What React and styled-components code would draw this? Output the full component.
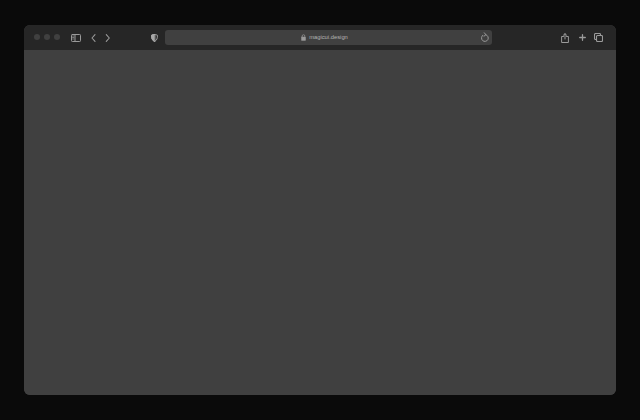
import styled, { createGlobalStyle } from "styled-components"

const Global = createGlobalStyle`
  html, body, #root {
    margin: 0;
    height: 100%;
  }
  body {
    background: #0a0a0a;
    font-family: "Liberation Sans", Arial, sans-serif;
  }
`

const Page = styled.div`
  box-sizing: border-box;
  width: 640px;
  height: 420px;
  padding: 25px 24px;
`

const Browser = styled.div`
  display: flex;
  flex-direction: column;
  height: 100%;
  border-radius: 6px;
  overflow: hidden;
  background: #404040;
`

const Toolbar = styled.div`
  display: flex;
  align-items: center;
  flex: none;
  height: 25px;
  box-sizing: border-box;
  padding: 0 13px 0 10px;
  background: #262626;
`

const Lights = styled.div`
  display: flex;
  gap: 4px;
  margin: 0 11px 1px 0;
`

const Light = styled.span`
  width: 6px;
  height: 6px;
  border-radius: 50%;
  background: #404040;
`

const Icon = styled.svg`
  display: block;
  flex: none;
  fill: none;
  stroke: #9a9a9a;
  stroke-width: 1;
  stroke-linecap: round;
  stroke-linejoin: round;
  margin-left: ${p => p.$left || 0}px;
`

const Address = styled.div`
  position: relative;
  display: flex;
  align-items: center;
  justify-content: center;
  gap: 3px;
  box-sizing: border-box;
  width: 327px;
  height: 15px;
  padding-right: 8px;
  margin: 0 auto 0 7px;
  border-radius: 3px;
  background: #404040;
`

const Url = styled.span`
  font-size: 5.8px;
  line-height: 15px;
  color: #b4b4b4;
`

const Reload = styled(Icon)`
  position: absolute;
  right: 2px;
  top: 2px;
`

const Content = styled.div`
  flex: 1;
  background: #404040;
`

export default function App() {
  return (
    <Page>
      <Global />
      <Browser>
        <Toolbar>
          <Lights>
            <Light />
            <Light />
            <Light />
          </Lights>
          <Icon width="10" height="8" viewBox="0 0 10 8">
            <rect x="0.5" y="0.5" width="9" height="7" rx="0.8" />
            <path d="M4 0.5v7" />
            <path d="M1.6 2h1.200M1.600 3.500h1.200M1.600 5h1.200" strokeWidth="0.7" />
          </Icon>
          <Icon $left={10} width="5" height="8" viewBox="0 0 5 8">
            <path d="M4 .6 1 4l3 3.400" strokeWidth="1.100" />
          </Icon>
          <Icon $left={9} width="5" height="8" viewBox="0 0 5 8">
            <path d="M1.300.6 4.300 4l-3 3.400" strokeWidth="1.100" />
          </Icon>
          <Icon $left={41} width="7" height="8" viewBox="0 0 7 8">
            <path d="M3.500.5C4.500.5 5.500.8 6.400 1.200 6.600 4 6 6.300 3.500 7.500 1 6.300.4 4 .6 1.200 1.500.8 2.500.5 3.500.5z" />
            <path d="M3.500.5C2.500.5 1.500.8.600 1.200.4 4 1 6.300 3.500 7.500z" fill="#a8a8a8" stroke="#a8a8a8" />
          </Icon>
          <Address>
            <Icon width="5" height="7" viewBox="0 0 5 7">
              <path d="M1.200 3V2a1.300 1.300 0 0 1 2.600 0v1" strokeWidth="0.7" />
              <rect x="0.400" y="3" width="4.200" height="3.500" rx="0.500" fill="#9a9a9a" strokeWidth="0.400" />
            </Icon>
            <Url>magicui.design</Url>
            <Reload width="10" height="11" viewBox="0 0 10 11">
              <path d="M5.800 2.700a3.400 3.400 0 1 1-2.900.5" />
              <path d="M4.300 .8 5.900 2.700 4 4.200" />
            </Reload>
          </Address>
          <Icon width="8" height="10" viewBox="0 0 8 10">
            <path d="M2.500 3.500H.6v6h6.800v-6H5.500" />
            <path d="M4 6V.7M2.400 2.200 4 .7l1.600 1.500" />
          </Icon>
          <Icon $left={10} width="7" height="7" viewBox="0 0 7 7">
            <path d="M3.500.7v5.600M.7 3.500h5.600" strokeWidth="1.300" />
          </Icon>
          <Icon $left={8} width="9" height="9" viewBox="0 0 9 9">
            <rect x="2.500" y="2.500" width="6" height="6" rx="1" strokeWidth="1.100" />
            <path d="M2.500 6.500h-1a1 1 0 0 1-1-1v-4a1 1 0 0 1 1-1h4a1 1 0 0 1 1 1v1" strokeWidth="1.100" />
          </Icon>
        </Toolbar>
        <Content />
      </Browser>
    </Page>
  )
}
